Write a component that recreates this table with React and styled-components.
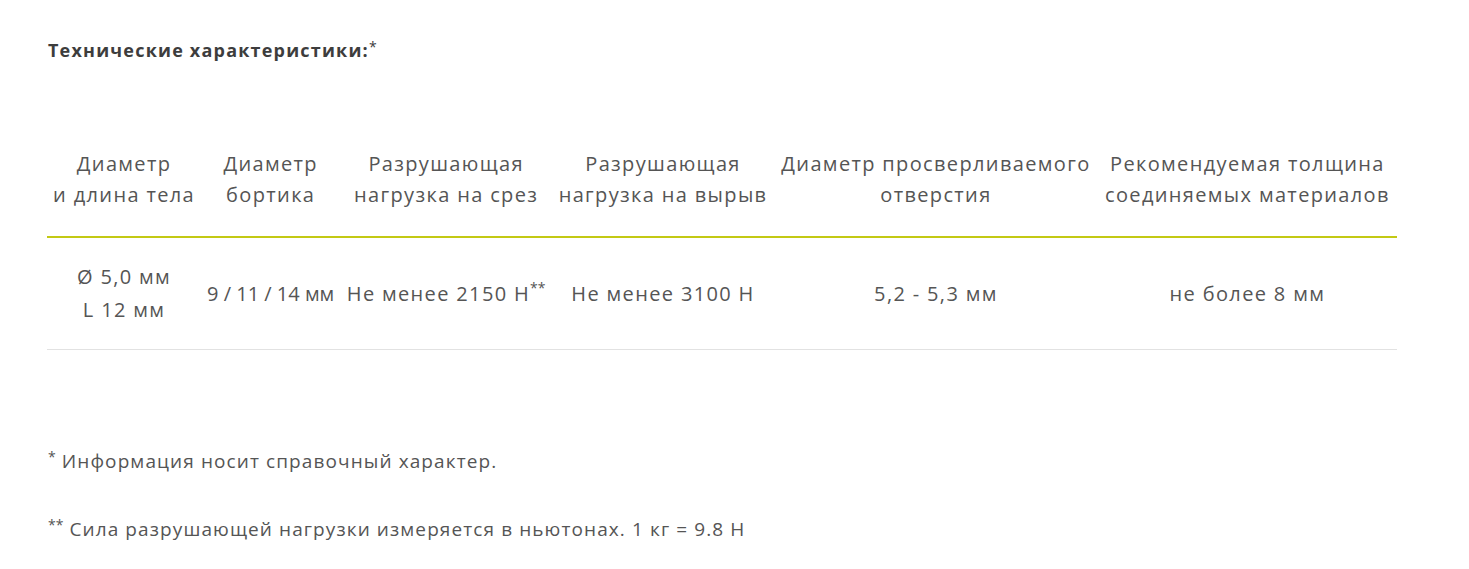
import React from "react";
import styled, { createGlobalStyle } from "styled-components";

const Global = createGlobalStyle`
  html, body { margin: 0; padding: 0; background: #ffffff; }
  body { font-family: "Open Sans", "Noto Sans", sans-serif; color: #555555; }
`;

const Page = styled.div`
  padding: 38px 72px 0 47px;
`;

const Title = styled.h2`
  margin: 0;
  padding-left: 1px;
  font-size: 18px;
  line-height: 24px;
  font-weight: 700;
  letter-spacing: 1.2px;
  color: #3d3d3d;
`;

const Star = styled.span`
  font-weight: 400;
  font-size: 14px;
  letter-spacing: 0;
  vertical-align: top;
  line-height: 18px;
`;

const Table = styled.table`
  width: 100%;
  margin-top: 86px;
  border-collapse: collapse;
`;

const Th = styled.th`
  padding: 0 5px 26px;
  font-weight: 400;
  font-size: 20px;
  line-height: 31px;
  letter-spacing: 1.35px;
  color: #555555;
  text-align: center;
  vertical-align: top;
  border-bottom: 2px solid #c3c914;
  white-space: nowrap;
`;

const Td = styled.td`
  padding: 22px 5px 23px;
  font-size: 20px;
  line-height: 33px;
  letter-spacing: ${(p) => (p.$tight ? "0" : "1.35px")};
  color: #555555;
  text-align: center;
  vertical-align: middle;
  border-bottom: 1px solid #e2e2e2;
  white-space: nowrap;
`;

const Sup = styled.span`
  font-size: 14px;
  letter-spacing: 0;
  vertical-align: top;
  line-height: 22px;
`;

const Note = styled.p`
  margin: ${(p) => p.$top}px 0 0 1px;
  font-size: 19px;
  line-height: 28px;
  letter-spacing: 1.1px;
  color: #555555;
`;

const NoteStar = styled.span`
  font-size: 14px;
  letter-spacing: 0;
  vertical-align: top;
  line-height: 20px;
`;

const headers = [
  ["Диаметр", "и длина тела"],
  ["Диаметр", "бортика"],
  ["Разрушающая", "нагрузка на срез"],
  ["Разрушающая", "нагрузка на вырыв"],
  ["Диаметр просверливаемого", "отверстия"],
  ["Рекомендуемая толщина", "соединяемых материалов"],
];

export default function App() {
  return (
    <>
      <Global />
      <Page>
        <Title>
          Технические характеристики:<Star>*</Star>
        </Title>
        <Table>
          <thead>
            <tr>
              {headers.map((h, i) => (
                <Th key={i}>
                  {h[0]}
                  <br />
                  {h[1]}
                </Th>
              ))}
            </tr>
          </thead>
          <tbody>
            <tr>
              <Td>
                Ø 5,0 мм
                <br />L 12 мм
              </Td>
              <Td $tight>9 / 11 / 14 мм</Td>
              <Td>
                Не менее 2150 Н<Sup>**</Sup>
              </Td>
              <Td>Не менее 3100 Н</Td>
              <Td>5,2 - 5,3 мм</Td>
              <Td>не более 8 мм</Td>
            </tr>
          </tbody>
        </Table>
        <Note $top={97}>
          <NoteStar>*</NoteStar> Информация носит справочный характер.
        </Note>
        <Note $top={40}>
          <NoteStar>**</NoteStar> Сила разрушающей нагрузки измеряется в ньютонах. 1 кг = 9.8 Н
        </Note>
      </Page>
    </>
  );
}
